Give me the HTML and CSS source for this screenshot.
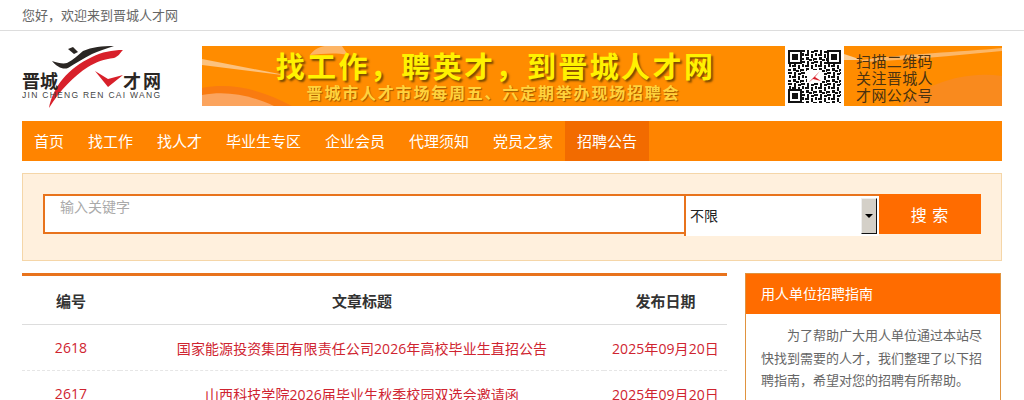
FILE: index.html
```html
<!DOCTYPE html>
<html>
<head>
    <meta charset="utf-8" />
    <title>招聘公告 - 晋城人才网</title>
    <link rel="stylesheet" href="styles.css">
</head>
<body>
    <div class="TopBar">
        <div class="Wrap">您好，欢迎来到晋城人才网</div>
    </div>
    <div class="Wrap">
        <div class="Head">
            <svg class="Logo" width="140" height="68" viewBox="0 0 140 68">
                <path d="M27 65 C31 44 46 25 70 14 C80 9 90 7 101 7 C98 10 97 13 92 15 C82 16 74 19 66 24 C52 33 38 47 27 65 Z" fill="#d8202a" />
                <path d="M30 18 C36 20 41 21 45 20 C51 17 56 12 61 8 C70 4 80 3 92 3 C84 6 76 8 70 11 C62 15 54 20 46 25 C41 27 35 24 30 18 Z" fill="#2a2623" />
                <path d="M46 6 L51 4 L56 9 L52 11 Z" fill="#2a2623" />
                <path d="M73 28 L86 36 L101 32 L86 44 Z" fill="#d8202a" />
                <text class="LogoCn" x="0" y="45" textLength="36">晋城</text>
                <text class="LogoCn" x="101" y="45" textLength="38">才网</text>
                <text class="LogoEn" x="0" y="55" textLength="138">JIN CHENG REN CAI WANG</text>
            </svg>
            <div class="Banner">
                <svg class="BannerBg" width="800" height="60" viewBox="0 0 800 60">
                    <path d="M0 60 L0 42 C30 36 60 44 90 60 Z" fill="#f97b10" />
                    <path d="M0 60 L0 49 C26 44 50 50 72 60 Z" fill="#fba45e" />
                    <path d="M0 13 L88 30 L0 19 Z" fill="#fcc27e" />
                    <path d="M108 9 C114 0 126 -2 140 0 L146 9 C132 6 120 8 108 9 Z" fill="#fdb566" />
                    <path d="M642 8 L660 14 L642 14 Z" fill="#fbd09a" />
                    <path d="M660 14 C700 8 760 6 800 2 L800 5 C750 10 700 14 660 16 Z" fill="#fcb768" />
                    <path d="M700 60 C720 40 760 24 800 30 L800 60 Z" fill="#f98a1e" />
                </svg>
                <div class="BannerMain">
                    <div class="BannerTitle">找工作，聘英才，到晋城人才网</div>
                    <div class="BannerSub">晋城市人才市场每周五、六定期举办现场招聘会</div>
                </div>
                <div class="QrBox">
                    <svg width="53" height="53" viewBox="0 0 53 53" shape-rendering="crispEdges">
                        <defs>
                            <pattern id="qrDots" width="13" height="11" patternUnits="userSpaceOnUse">
                                <path d="M0 0h4v2h-4zM6 0h2v4h-2zM10 1h3v2h-3zM1 3h2v3h-2zM4 4h4v2h-4zM10 4h2v4h-2zM0 8h3v2h-3zM5 7h3v3h-3zM12 8h1v3h-1zM8 9h3v2h-3z" fill="#111" />
                            </pattern>
                        </defs>
                        <rect width="53" height="53" fill="url(#qrDots)" />
                        <g class="QrEye"><rect x="1" y="1" width="12" height="12" /><rect x="40" y="1" width="12" height="12" /><rect x="1" y="40" width="12" height="12" /></g>
                        <g fill="#111"><rect x="4" y="4" width="6" height="6" /><rect x="43" y="4" width="6" height="6" /><rect x="4" y="43" width="6" height="6" /></g>
                        <rect x="19" y="20" width="15" height="13" fill="#fff" />
                        <path d="M20 33 L32 21 L27 27 L33 31 L25 29 Z" fill="#d8202a" shape-rendering="auto" />
                    </svg>
                </div>
                <div class="BannerSide">扫描二维码<br />关注晋城人<br />才网公众号</div>
            </div>
        </div>
        <ul class="Nav">
            <li>首页</li>
            <li>找工作</li>
            <li>找人才</li>
            <li>毕业生专区</li>
            <li>企业会员</li>
            <li>代理须知</li>
            <li>党员之家</li>
            <li class="Current">招聘公告</li>
        </ul>
        <div class="SearchBox">
            <input type="text" class="Textbox" placeholder="输入关键字" />
            <div class="SelectWrap">
                <select class="TypeSelect">
                    <option>不限</option>
                </select>
                <span class="SelectBtn"></span>
            </div>
            <input type="button" class="Button" value="搜 索" />
        </div>
        <div class="Main">
            <table class="NewsList">
                <tr>
                    <th class="ColNum">编号</th>
                    <th>文章标题</th>
                    <th class="ColDate">发布日期</th>
                </tr>
                <tr>
                    <td>2618</td>
                    <td>国家能源投资集团有限责任公司2026年高校毕业生直招公告</td>
                    <td>2025年09月20日</td>
                </tr>
                <tr>
                    <td>2617</td>
                    <td>山西科技学院2026届毕业生秋季校园双选会邀请函</td>
                    <td>2025年09月20日</td>
                </tr>
            </table>
            <div class="Guide">
                <div class="GuideTitle">用人单位招聘指南</div>
                <p class="GuideText">为了帮助广大用人单位通过本站尽快找到需要的人才，我们整理了以下招聘指南，希望对您的招聘有所帮助。</p>
            </div>
        </div>
    </div>
</body>
</html>
```

FILE: styles.css
```css
body {
    margin: 0;
    color: #666;
    font-family: "Open Sans", "Noto Sans CJK SC", sans-serif;
    font-size: 14px;
}
.Wrap {
    width: 980px;
    margin: 0 auto;
}
.TopBar {
    height: 30px;
    line-height: 30px;
    font-size: 13px;
    border-bottom: 1px solid #ddd;
}
.Head {
    display: flex;
    align-items: center;
    justify-content: space-between;
    height: 90px;
}
.Logo {
    display: block;
    margin-top: 1px;
}
.LogoCn {
    font-family: "Noto Sans CJK SC", sans-serif;
    font-size: 18px;
    font-weight: 700;
    fill: #2a2623;
}
.LogoEn {
    font-family: "Liberation Sans", sans-serif;
    font-size: 8.5px;
    fill: #444;
}
.Banner {
    position: relative;
    display: flex;
    width: 800px;
    height: 60px;
    background-color: #ff8c00;
}
.BannerBg {
    position: absolute;
    left: 0;
    top: 0;
}
.BannerMain {
    position: relative;
    width: 583px;
    text-align: center;
    font-family: "Noto Sans CJK SC", sans-serif;
    font-weight: 700;
}
.BannerTitle {
    margin-top: 1px;
    padding-left: 4px;
    height: 36px;
    line-height: 36px;
    font-size: 29px;
    letter-spacing: 2.4px;
    color: #fff200;
    text-shadow: 2px 2px 2px #7a4a00;
}
.BannerSub {
    height: 19px;
    line-height: 19px;
    font-size: 16px;
    letter-spacing: 1.8px;
    color: #ffd23c;
    text-shadow: 1px 1px 1px #a05a00;
}
.QrBox {
    position: relative;
    display: flex;
    align-items: center;
    justify-content: center;
    width: 59px;
    background-color: #fff;
}
.QrEye rect {
    fill: #fff;
    stroke: #111;
    stroke-width: 2;
}
.BannerSide {
    position: relative;
    padding: 6px 0 0 12px;
    font-family: "Noto Sans CJK SC", sans-serif;
    font-size: 15px;
    letter-spacing: 0.4px;
    line-height: 17px;
    color: #4a3210;
}
.Nav {
    display: flex;
    margin: 0;
    padding: 0;
    list-style: none;
    height: 40px;
    line-height: 40px;
    font-size: 15px;
    background-color: #ff8400;
    color: #fff;
}
.Nav li {
    padding: 0 12px;
}
.Current {
    background-color: #f26b00;
}
.SearchBox {
    display: flex;
    align-items: flex-start;
    margin-top: 12px;
    padding: 20px 20px 0;
    box-sizing: border-box;
    height: 88px;
    background-color: #fff0dd;
    border: 1px solid #f5d6a8;
}
.Textbox {
    box-sizing: border-box;
    width: 641px;
    height: 40px;
    padding: 0 15px 16px;
    border: 2px solid #e8731c;
    border-right: 0;
    outline: 0;
    font-family: "Noto Sans CJK SC", sans-serif;
    font-size: 14px;
}
.Textbox::placeholder {
    color: #aaa;
}
.SelectWrap {
    position: relative;
    width: 195px;
    height: 42px;
}
.TypeSelect {
    appearance: none;
    box-sizing: border-box;
    width: 100%;
    height: 100%;
    padding: 0 0 2px 4px;
    background-color: #fff;
    border: 0;
    border-top: 2px solid #e8731c;
    border-left: 2px solid #e8731c;
    border-radius: 0;
    color: #222;
    font-family: "Noto Sans CJK SC", sans-serif;
    font-size: 14px;
}
.SelectBtn {
    position: absolute;
    right: 2px;
    top: 4px;
    box-sizing: border-box;
    width: 16px;
    height: 36px;
    background-color: #d4d0c8;
    border: 1px solid;
    border-color: #eee #111 #111 #eee;
}
.SelectBtn:after {
    content: "";
    position: absolute;
    left: 3px;
    top: 15px;
    border-top: 4px solid #000;
    border-left: 4px solid transparent;
    border-right: 4px solid transparent;
}
.Button {
    width: 102px;
    height: 40px;
    padding: 0;
    border: 0;
    background-color: #ff6c00;
    color: #fff;
    font-family: "Noto Sans CJK SC", sans-serif;
    font-size: 16px;
    letter-spacing: 1px;
}
.Main {
    display: flex;
    align-items: flex-start;
    justify-content: space-between;
    margin-top: 12px;
}
.NewsList {
    width: 705px;
    border-collapse: collapse;
    border-top: 3px solid #e8731c;
    table-layout: fixed;
}
.NewsList th {
    height: 48px;
    padding: 0;
    font-size: 15px;
    color: #333;
    border-bottom: 1px solid #ddd;
}
.NewsList td {
    height: 45px;
    padding: 0;
    text-align: center;
    color: #cf2430;
    letter-spacing: 0.08px;
    border-bottom: 1px dashed #e6e6e6;
}
.ColNum {
    width: 98px;
}
.ColDate {
    width: 123px;
}
.Guide {
    width: 256px;
    margin-right: 1px;
    box-sizing: border-box;
    border: 1px solid #e0933f;
}
.GuideTitle {
    height: 40px;
    line-height: 40px;
    padding-left: 15px;
    background-color: #ff6c00;
    color: #fff;
}
.GuideText {
    margin: 0;
    padding: 10px 15px 20px;
    font-size: 13px;
    line-height: 22.5px;
    text-indent: 26px;
}
```
